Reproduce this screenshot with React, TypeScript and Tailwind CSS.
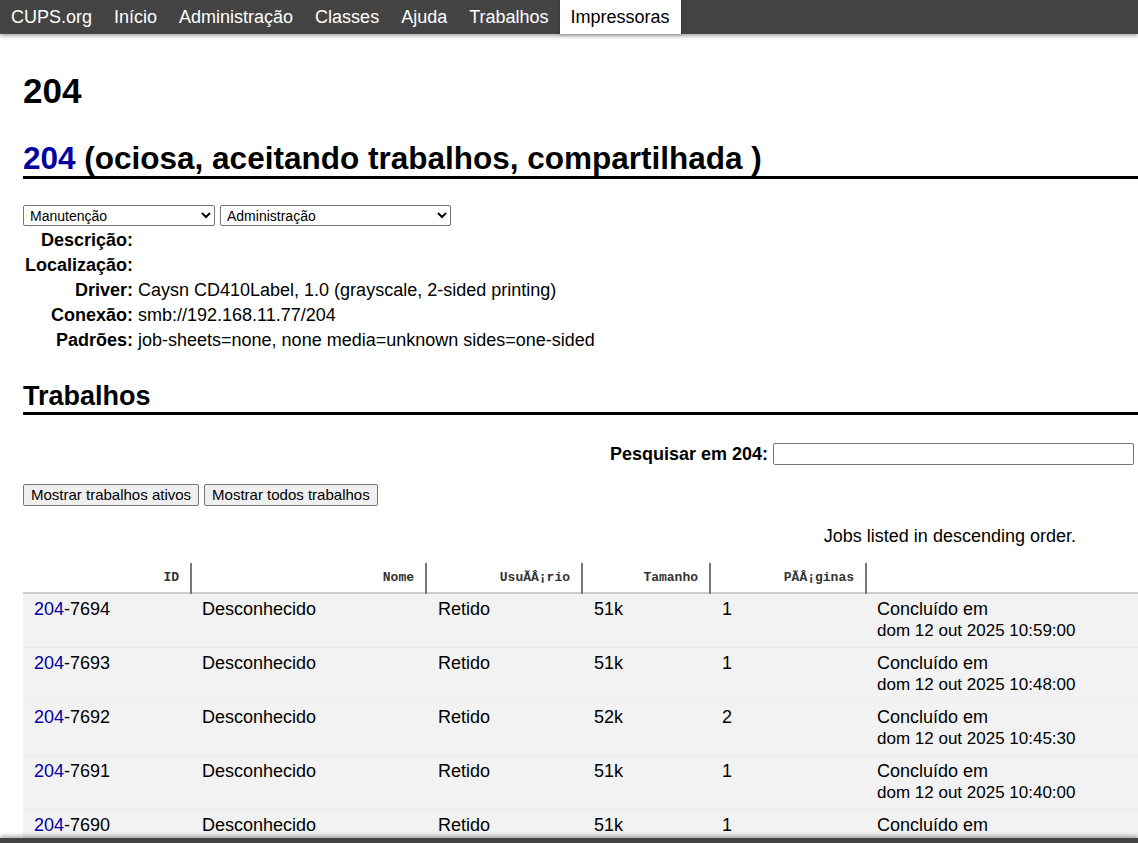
import React from 'react';

const NAV = ['CUPS.org', 'Início', 'Administração', 'Classes', 'Ajuda', 'Trabalhos', 'Impressoras'];

const JOBS = [
  { id: '7694', size: '51k', pages: '1', date: 'dom 12 out 2025 10:59:00' },
  { id: '7693', size: '51k', pages: '1', date: 'dom 12 out 2025 10:48:00' },
  { id: '7692', size: '52k', pages: '2', date: 'dom 12 out 2025 10:45:30' },
  { id: '7691', size: '51k', pages: '1', date: 'dom 12 out 2025 10:40:00' },
  { id: '7690', size: '51k', pages: '1', date: 'dom 12 out 2025 10:34:00' },
];

const INFO = [
  ['Descrição:', ''],
  ['Localização:', ''],
  ['Driver:', 'Caysn CD410Label, 1.0 (grayscale, 2-sided printing)'],
  ['Conexão:', 'smb://192.168.11.77/204'],
  ['Padrões:', 'job-sheets=none, none media=unknown sides=one-sided'],
];

const COLS = [
  { label: 'ID', w: 'w-[168px]' },
  { label: 'Nome', w: 'w-[235px]' },
  { label: 'UsuÃÂ¡rio', w: 'w-[156px]' },
  { label: 'Tamanho', w: 'w-[128px]' },
  { label: 'PÃÂ¡ginas', w: 'w-[156px]' },
];

export default function App() {
  return (
    <div className="min-h-screen bg-white text-black text-[18px] font-['Liberation_Sans',Arial,sans-serif]">
      <nav className="flex h-[34px] bg-[#444] shadow-[0_2px_4px_rgba(0,0,0,0.35)]">
        {NAV.map((n) => (
          <a
            key={n}
            className={
              n === 'Impressoras'
                ? 'px-[11px] leading-[34px] text-[18px] bg-white text-black shadow-[0_0_4px_rgba(0,0,0,0.3)]'
                : 'px-[11px] leading-[34px] text-[18px] text-white'
            }
          >
            {n}
          </a>
        ))}
      </nav>

      <div className="pl-[23px]">
        <h1 className="mt-[36px] text-[35px] leading-[42px] font-bold">204</h1>

        <h2 className="mt-[28px] text-[31.5px] leading-[36px] font-bold border-b-[3px] border-black">
          <a className="text-[#0000a0]">204</a> (ociosa, aceitando trabalhos, compartilhada )
        </h2>

        <div className="mt-[26px] flex gap-[5px]">
          <select className="w-[192px] h-[21px] text-[14px] bg-white border border-[#767676] rounded-[2px] pl-[2px]">
            <option>Manutenção</option>
          </select>
          <select className="w-[231px] h-[21px] text-[14px] bg-white border border-[#767676] rounded-[2px] pl-[2px]">
            <option>Administração</option>
          </select>
        </div>

        <div className="mt-[2px] grid grid-cols-[110px_1fr] gap-x-[5px]">
          {INFO.map(([k, v]) => (
            <React.Fragment key={k}>
              <div className="text-right font-bold leading-[25px] whitespace-nowrap">{k}</div>
              <div className="leading-[25px]">{v}</div>
            </React.Fragment>
          ))}
        </div>

        <h2 className="mt-[28px] text-[27px] leading-[31px] font-bold border-b-[3px] border-black">Trabalhos</h2>

        <div className="mt-[28px] h-[22px] flex justify-end items-center gap-[5px] pr-[4px] leading-[22px]">
          <span className="font-bold">Pesquisar em 204:</span>
          <input className="w-[361px] h-[22px] border border-[#767676] rounded-[2px] bg-white" />
        </div>

        <div className="mt-[19px] flex gap-[5px]">
          <button className="h-[22px] px-[7px] text-[15px] leading-[20px] bg-[#efefef] border border-[#767676] rounded-[2px]">
            Mostrar trabalhos ativos
          </button>
          <button className="h-[22px] px-[7px] text-[15px] leading-[20px] bg-[#efefef] border border-[#767676] rounded-[2px]">
            Mostrar todos trabalhos
          </button>
        </div>

        <p className="mt-[20px] text-right pr-[62px] leading-[21px]">Jobs listed in descending order.</p>

        <table className="mt-[16px] w-[1115px] border-collapse">
          <thead>
            <tr className="border-b-2 border-[#ccc]">
              {COLS.map((c) => (
                <th
                  key={c.label}
                  className={`${c.w} h-[30px] px-[11px] text-right text-[13px] font-bold text-[#333] border-r-2 border-[#777] font-['Liberation_Mono',monospace]`}
                >
                  {c.label}
                </th>
              ))}
              <th />
            </tr>
          </thead>
          <tbody>
            {JOBS.map((j) => (
              <tr key={j.id} className="bg-[#f2f2f2] border-t border-[#ebebeb] align-top leading-[22px]">
                <td className="pl-[11px] pt-[4px] pb-[5px]">
                  <a className="text-[#0000a0]">204</a>-{j.id}
                </td>
                <td className="pl-[11px] pt-[4px] pb-[5px]">Desconhecido</td>
                <td className="pl-[12px] pt-[4px] pb-[5px]">Retido</td>
                <td className="pl-[12px] pt-[4px] pb-[5px]">{j.size}</td>
                <td className="pl-[12px] pt-[4px] pb-[5px]">{j.pages}</td>
                <td className="pl-[11px] pt-[4px] pb-[5px]">
                  <div className="h-[22px]">Concluído em</div>
                  <div className="h-[22px] text-[17px]">{j.date}</div>
                </td>
              </tr>
            ))}
          </tbody>
        </table>
      </div>

      <div className="fixed bottom-0 left-0 right-0 h-[5px] bg-[#444] shadow-[0_-2px_4px_rgba(0,0,0,0.35)]" />
    </div>
  );
}
